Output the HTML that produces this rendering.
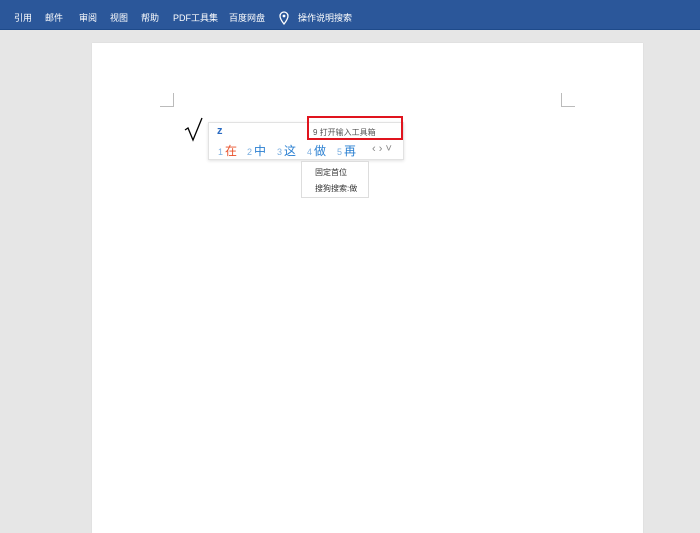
<!DOCTYPE html>
<html><head><meta charset="utf-8"><style>
*{margin:0;padding:0;box-sizing:border-box}
body{width:700px;height:525px;overflow:hidden;background:#e6e6e6;font-family:"Liberation Sans","Noto Sans CJK SC",sans-serif;position:relative}
.bar{position:absolute;left:0;top:0;width:700px;height:30px;background:#2b579a;border-bottom:1px solid #1e4a8a}
.bar span{position:absolute;top:12px;font-size:9px;color:#fff;line-height:12px}
.page{position:absolute;left:92px;top:43px;width:551px;height:490px;background:#fff;box-shadow:0 0 1px #ccc}
.c{position:absolute;width:14px;height:14px;border-color:#bbb;border-style:solid;border-width:0}
.ime{position:absolute;left:208px;top:122px;width:196px;height:38px;background:#fff;border:1px solid #e2e2e2;box-shadow:0 1px 3px rgba(0,0,0,.12)}
.ime .z{position:absolute;left:8px;top:2px;font-size:11px;color:#2a6bc2;font-weight:bold}
.cand{position:absolute;top:19px;font-size:12px;color:#2a7fd1;white-space:nowrap}
.cand small{font-size:9px;color:#7aaee0;margin-right:2px}
.menu{position:absolute;left:301px;top:161px;width:68px;height:37px;background:#fff;border:1px solid #ddd;font-size:8px;color:#333}
.red{position:absolute;left:307px;top:116px;width:96px;height:24px;border:2px solid #e0141e}
</style></head><body>
<div class="bar">
<span style="left:14px">引用</span><span style="left:45px">邮件</span><span style="left:79px">审阅</span><span style="left:110px">视图</span><span style="left:141px">帮助</span><span style="left:173px">PDF工具集</span><span style="left:229px">百度网盘</span>
<svg style="position:absolute;left:279px;top:11px" width="10" height="14" viewBox="0 0 10 14"><path d="M5 13C5 13 1 8 1 5a4 4 0 0 1 8 0c0 3-4 8-4 8z" fill="none" stroke="#fff" stroke-width="1.3"/><circle cx="5" cy="5" r="1.4" fill="#fff"/></svg>
<span style="left:298px">操作说明搜索</span>
</div>
<div class="page">
<div class="c" style="left:68px;top:50px;border-right-width:1px;border-bottom-width:1px"></div>
<div class="c" style="left:469px;top:50px;border-left-width:1px;border-bottom-width:1px"></div>
</div>
<svg style="position:absolute;left:184px;top:117px" width="20" height="26" viewBox="0 0 20 26"><path d="M1 13 L4 11 L9 23 L18 1" fill="none" stroke="#000" stroke-width="1.3"/></svg>
<div class="ime">
<div class="z">z</div>
<div style="position:absolute;left:104px;top:4px;font-size:8px;color:#555">9 打开输入工具箱</div>
<div class="cand" style="left:9px"><small>1</small><span style="color:#e8502a">在</span></div>
<div class="cand" style="left:38px"><small>2</small>中</div>
<div class="cand" style="left:68px"><small>3</small>这</div>
<div class="cand" style="left:98px"><small>4</small>做</div>
<div class="cand" style="left:128px"><small>5</small>再</div>
<div style="position:absolute;left:163px;top:20px;font-size:11px;color:#888">‹ › ˅</div>
</div>
<div class="red"></div>
<div class="menu"><div style="position:absolute;left:13px;top:5px">固定首位</div><div style="position:absolute;left:13px;top:21px">搜狗搜索:做</div></div>
</body></html>
